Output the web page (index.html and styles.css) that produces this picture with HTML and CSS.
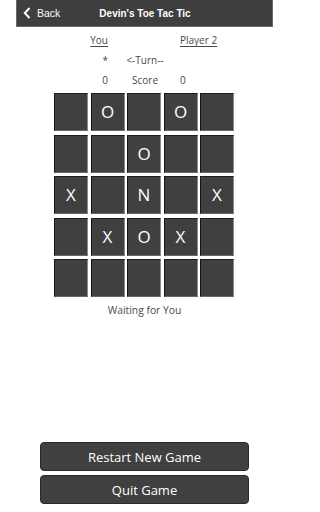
FILE: index.html
```html
<!DOCTYPE html>
<html>
<head>
<meta charset="utf-8">
<link rel="stylesheet" href="styles.css">
</head>
<body>
<div class="page">
  <header class="topbar">
    <div class="back">
      <svg class="chev" width="8" height="12" viewBox="0 0 8 12"><polyline points="6.5,1 1.8,6 6.5,11" fill="none" stroke="#fff" stroke-width="2"/></svg>
      <span>Back</span>
    </div>
    <div class="title">Devin's Toe Tac Tic</div>
  </header>

  <div class="info">
    <div class="left"><u>You</u></div><div class="mid"></div><div class="right"><u>Player 2</u></div>
    <div class="left">*</div><div class="mid">&lt;-Turn--</div><div class="right"></div>
    <div class="left">0</div><div class="mid">Score</div><div class="right">0</div>
  </div>

  <div class="board">
    <div class="cell"></div><div class="cell">O</div><div class="cell"></div><div class="cell">O</div><div class="cell"></div>
    <div class="cell"></div><div class="cell"></div><div class="cell">O</div><div class="cell"></div><div class="cell"></div>
    <div class="cell">X</div><div class="cell"></div><div class="cell">N</div><div class="cell"></div><div class="cell">X</div>
    <div class="cell"></div><div class="cell">X</div><div class="cell">O</div><div class="cell">X</div><div class="cell"></div>
    <div class="cell"></div><div class="cell"></div><div class="cell"></div><div class="cell"></div><div class="cell"></div>
  </div>

  <div class="status">Waiting for You</div>

  <div class="actions">
    <button class="btn">Restart New Game</button>
    <button class="btn">Quit Game</button>
  </div>
</div>
</body>
</html>
```
FILE: styles.css
```css
html, body {
  margin: 0;
  padding: 0;
  background: #fff;
}
.page {
  width: 288px;
  height: 512px;
  display: flex;
  flex-direction: column;
  font-family: "Open Sans", "Liberation Sans", sans-serif;
  color: #4a4a4a;
}
.topbar {
  position: relative;
  margin: 0 15px 0 16px;
  height: 27px;
  background: #3e3e3e;
  border: 1px solid #6a6a6a;
  border-top: none;
  box-sizing: border-box;
  display: flex;
  align-items: center;
  justify-content: center;
  font-family: "Liberation Sans", Arial, sans-serif;
  color: #fff;
  font-size: 10px;
}
.back {
  position: absolute;
  left: 6px;
  top: 0;
  height: 100%;
  display: flex;
  align-items: center;
  gap: 6px;
  font-size: 10.5px;
}
.chev {
  display: block;
}
.title {
  font-weight: bold;
  margin-left: 1px;
}
.info {
  margin-top: 3px;
  display: grid;
  grid-template-columns: 1fr 70px 1fr;
  grid-auto-rows: 20px;
  font-size: 10px;
  line-height: 20px;
}
.info .left {
  text-align: right;
  padding-right: 1px;
}
.info .mid {
  text-align: center;
  padding-left: 2px;
}
.info .right {
  text-align: left;
  padding-left: 1px;
}
.info u {
  text-decoration-thickness: 1px;
  text-underline-offset: 2px;
}
.board {
  margin: 3px auto 0;
  display: grid;
  grid-template-columns: repeat(5, 34px);
  grid-auto-rows: 38px;
  column-gap: 2.5px;
  row-gap: 3.5px;
}
.cell {
  box-sizing: border-box;
  background: #404040;
  border-left: 1px solid #151515;
  border-top: 1px solid #1e1e1e;
  border-right: 1px solid #8a8a8a;
  border-bottom: 1px solid #6a6a6a;
  color: #fff;
  font-size: 17px;
  display: flex;
  align-items: center;
  justify-content: center;
  padding-bottom: 1px;
}
.status {
  margin-top: 3px;
  text-align: center;
  font-size: 10.3px;
  line-height: 20px;
  padding-left: 1px;
}
.actions {
  margin-top: auto;
  margin-bottom: 8px;
  display: flex;
  flex-direction: column;
  align-items: center;
  gap: 4px;
}
.btn {
  width: 209px;
  height: 29px;
  margin-left: 1px;
  background: #404040;
  border: 1px solid #2a2a2a;
  border-radius: 4px;
  color: #fff;
  font-family: "Open Sans", "Liberation Sans", sans-serif;
  font-size: 13px;
  padding: 0;
  cursor: pointer;
}
```
